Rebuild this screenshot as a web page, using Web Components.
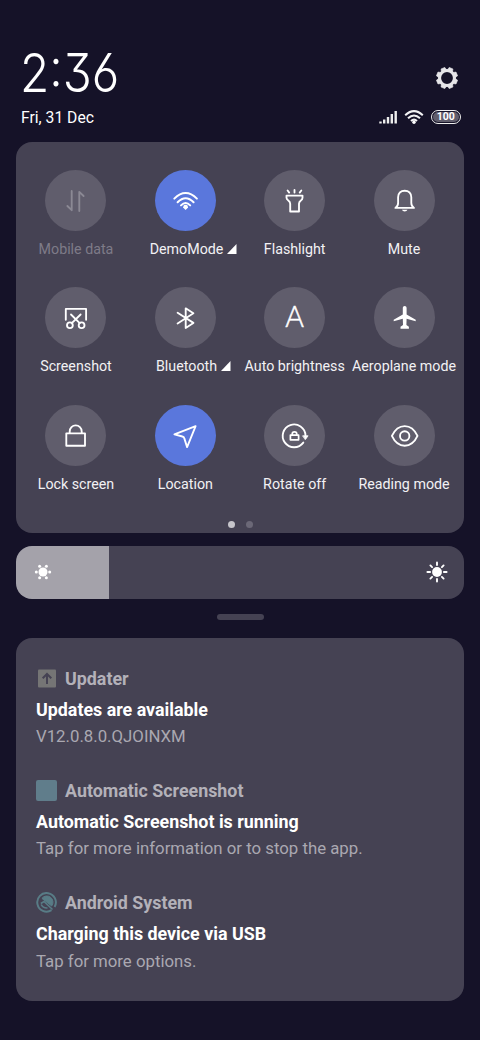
<!DOCTYPE html>
<html lang="en">
<head>
<meta charset="utf-8">
<title>Control centre</title>
<style>
html,body{margin:0;height:100%;background:#151228}
body{font-family:Roboto,"Noto Sans",sans-serif;color:#f2f1f4;overflow:hidden}
</style>
</head>
<body>
<control-centre></control-centre>
<script>
const define = (name, html, setup) => customElements.define(name, class extends HTMLElement {
  connectedCallback() {
    if (this.shadowRoot) return;
    const t = document.createElement('template');
    t.innerHTML = html;
    this.attachShadow({mode: 'open'}).append(t.content.cloneNode(true));
    if (setup) setup.call(this, this.shadowRoot);
  }
});

/* Tile glyphs share the 61 x 61 box of the round button. */
const icons = {
  data: '<path d="M26.7 21v19.2L22.4 36M34.3 41V21.8l4.3 4.2"/>',
  wifi: '<path d="M19.3 28.6Q30.6 17.4 41.9 28.6M22.6 32.2Q30.6 24.2 38.6 32.2M26 35.4Q30.6 30.8 35.2 35.4" stroke-width="2"/><path d="M28.2 37.2a2.400 2.400 0 0 1 4.800 0q0 .8-2.400 2.700q-2.400-1.900-2.400-2.700z" fill="#fff" stroke="none"/>',
  torch: '<path d="M30.5 20v2.600M23.600 20.500l1.600 2.100M37.300 20.500l-1.600 2.100M22.500 25.600h16v2.200q0 1.600-1.600 2.700q-1.900 1.300-1.900 3.300v7.700h-8.800v-7.700q0-2-1.900-3.300q-1.800-1.200-1.800-2.700z"/>',
  bell: '<path d="M21.400 37.900c1.900-1.300 2.700-2.500 2.700-5v-5.600c0-4 2.600-6.600 6.600-6.600s6.600 2.600 6.600 6.600v5.600c0 2.500.8 3.700 2.700 5z"/><path d="M27.900 39.800h5.600q-.7 1.800-2.800 1.800t-2.800-1.800z" fill="#fff" stroke="none"/>',
  shot: '<path d="M20.800 32.700V21.900h20.300v10.800M26 27.500l8.700 8.700M35.600 27.500l-8.800 8.700"/><circle cx="24.900" cy="38.200" r="2.900"/><circle cx="36.600" cy="38.200" r="2.900"/>',
  bt: '<path d="M22.600 25.700l15.800 10.200-7.700 5.100V21.300l7.700 5-15.800 10.300"/>',
  auto: '<text x="30.600" y="40.200" text-anchor="middle" font-family="Lato" font-weight="300" font-size="28.500" fill="#fff" stroke-width=".5">A</text>',
  plane: '<path d="M30.700 19.100c1.100 0 1.900.8 1.900 1.900v6.500l9.100 5.300v1.500l-9.100-2.500-.2 6.300 2.500 1.700v1.900h-8.400v-1.900l2.500-1.700-.2-6.300-9.100 2.500v-1.500l9.100-5.300V21c0-1.100.8-1.900 1.900-1.900z" fill="#fff" stroke="none"/>',
  lock: '<path d="M21.300 28.300h18.700v12.400H21.300zM24.700 28v-1.600a6 6 0 0 1 12 0V28"/>',
  nav: '<path d="M40.600 21.100 19.400 29.400l8 2.100q1.700.4 2 2.100l2.700 8.500z"/>',
  rotate: '<path d="M39.300 37.600A11.400 11.400 0 1 1 41.500 30.500"/><path d="M38.900 30.800h5.200l-2.600 3.600z" fill="#fff" stroke-width=".8"/><path d="M26.400 30.200h8.200v4.600h-8.200zM28.200 30v-.8a2.300 2.300 0 0 1 4.600 0v.8" stroke-width="1.700"/>',
  eye: '<path d="M17.900 30.900C24 17.800 37.400 17.800 43.500 30.900C37.400 44 24 44 17.900 30.900z"/><circle cx="30.700" cy="30.900" r="4.700"/>'
};

define('quick-tile', `<style>
:host{display:flex;flex-direction:column;align-items:center;min-width:0}
.disc{width:61px;height:61px;border-radius:50%;background:#605d6c}
:host([on]) .disc{background:#5a77dc}
svg{display:block}
.disc svg{fill:none;stroke:#fff;stroke-width:1.850;stroke-linecap:round;stroke-linejoin:round}
.label{display:flex;align-items:center;gap:4px;white-space:nowrap;margin-top:8px;font-size:14.250px;line-height:20px}
.more{display:none;margin:0 -15.900px 0 0}
:host([more]) .more{display:block}
:host([off]) .label{color:#7e7b88}
:host([off]) .disc svg{stroke:#8b8994}
</style>
<div class="disc"><svg width="61" height="61" viewBox="0 0 61 61"></svg></div>
<div class="label"><slot></slot><svg class="more" width="9.500" height="10"><path d="M9.500 0v10H0z" fill="#fff"/></svg></div>`,
function (root) { root.querySelector('.disc svg').innerHTML = icons[this.getAttribute('icon')]; });

define('status-header', `<style>
:host{display:flex;justify-content:space-between;height:142px;box-sizing:border-box;padding:45px 19px 0 21px}
.time{font:300 53px/56px Inter,sans-serif;font-feature-settings:"cv09","cv03";color:#fff;transform:scaleX(.9);transform-origin:-10px 0;white-space:nowrap;width:100px}
.date{font-size:15.700px;line-height:20px;margin-top:7px;color:#fff}
.right{display:flex;flex-direction:column;align-items:flex-end}
.gear{margin:21px 2px 0 0}
.row{display:flex;align-items:center;margin-top:20px;height:14px}
svg{display:block}
.bat{box-sizing:border-box;margin-left:7px;width:30.500px;height:14px;border:1.500px solid #eee;border-radius:7px;padding:1px}
.bat span{display:block;background:#605d6c;border-radius:5px;font:700 10.500px/10px Roboto,sans-serif;text-align:center;color:#fff;height:10px}
</style>
<div><div class="time">2:36</div><div class="date">Fri, 31 Dec</div></div>
<div class="right">
<svg class="gear" width="24" height="24" viewBox="-12 -12 24 24"><g fill="#e6e5e9"><path fill-rule="evenodd" d="M-9 0a9 9 0 1 0 18 0a9 9 0 1 0-18 0M-5.900 0a5.900 5.900 0 1 1 11.800 0a5.900 5.900 0 1 1-11.800 0"/><g id="t"></g></g></svg>
<div class="row">
<svg width="19" height="14"><path d="M1.500 13.500v-2M5.200 13.500v-4M9 13.500V7M12.800 13.500V4M16.700 13.500V1" stroke="#eee" stroke-width="2.400" fill="none"/></svg>
<svg style="margin-left:6px" width="20" height="14"><path d="M1.200 5.200Q10 -3 18.800 5.200M4 8.300Q10 2.600 16 8.300M7 11Q10 8.200 13 11" stroke="#f2f2f4" stroke-width="2" fill="none"/><circle cx="10" cy="12.200" r="1.700" fill="#fff"/></svg>
<div class="bat"><span>100</span></div>
</div></div>`,
function (root) {
  root.querySelector('#t').innerHTML = [0,1,2,3,4,5,6,7].map(i => `<path d="M-2.700-8 -2-10.600h4L2.700-8z" stroke="#e6e5e9" stroke-width=".6" stroke-linejoin="round" transform="rotate(${i * 45 + 22.5})"/>`).join('');
});

define('tile-panel', `<style>
:host{display:block;box-sizing:border-box;height:391px;margin:0 16px;padding:28px 5.300px 0;background:#454253;border-radius:16px}
.grid{display:grid;grid-template-columns:repeat(4,minmax(0,1fr));grid-auto-rows:117.300px}
.dots{display:flex;justify-content:center;gap:11px;margin-top:-1px}
i{width:7px;height:7px;border-radius:50%;background:#6b6877}
i:first-child{background:#c6c5cb}
</style><div class="grid"><slot></slot></div><div class="dots"><i></i><i></i></div>`);

define('brightness-slider', `<style>
:host{display:flex;align-items:center;justify-content:space-between;box-sizing:border-box;height:53.500px;margin:12.500px 16px 0;padding:0 15px;border-radius:16px;background:linear-gradient(90deg,#a4a2aa 93.500px,#454253 93.500px)}
svg{display:block}
</style>
<svg width="24" height="24" viewBox="-12 -12 24 24" fill="#fff"><circle r="4.500"/><circle cx="6.700" r="1.500"/><circle cx="-6.700" r="1.500"/><circle cx="3.350" cy="5.800" r="1.500"/><circle cx="-3.350" cy="5.800" r="1.500"/><circle cx="3.350" cy="-5.800" r="1.500"/><circle cx="-3.350" cy="-5.800" r="1.500"/></svg>
<svg width="24" height="24" viewBox="-12 -12 24 24" fill="#fff"><circle r="4.900"/><path d="M0-6.900v-2.700M0 9.600v-2.700M6.900 0h2.700M-6.900 0h-2.700M4.900 4.900l1.700 1.700M-4.900 4.900l-1.700 1.700M4.900-4.900l1.700-1.700M-4.900-4.900l-1.700-1.700" stroke="#fff" stroke-width="1.900" stroke-linecap="round"/></svg>`);

define('drag-handle', `<style>:host{display:block;width:47px;height:6px;border-radius:3px;background:#454253;margin:15px auto 17.500px}</style>`);

define('notification-list', `<style>:host{display:block;box-sizing:border-box;height:363.500px;margin:0 16px;padding:28.500px 20px 0;border-radius:16px;background:#454253}</style><slot></slot>`);

define('notification-item', `<style>
:host{display:block;height:112.400px}
.head{display:flex;align-items:center;gap:8px;height:24px;font-size:17.850px;line-height:22px;font-weight:700;color:#b3b1b9}
.app{padding-top:1px}
.icon{width:21px;height:21px}
.title{font-weight:700;font-size:17.850px;line-height:24px;margin-top:7.500px;color:#fff}
.text{font-size:16.800px;line-height:22px;margin-top:3.300px;color:#aaa8b1}
</style>
<div class="head"><div class="icon"><slot name="icon"></slot></div><div class="app"><slot name="app"></slot></div></div>
<div class="title"><slot name="title"></slot></div>
<div class="text"><slot></slot></div>`);

define('control-centre', `<style>
:host{display:block;width:480px;height:1040px;background:#151228}
svg{display:block}
</style>
<status-header></status-header>
<tile-panel>
<quick-tile icon="data" off>Mobile data</quick-tile>
<quick-tile icon="wifi" on more>DemoMode</quick-tile>
<quick-tile icon="torch">Flashlight</quick-tile>
<quick-tile icon="bell">Mute</quick-tile>
<quick-tile icon="shot">Screenshot</quick-tile>
<quick-tile icon="bt" more>Bluetooth</quick-tile>
<quick-tile icon="auto">Auto brightness</quick-tile>
<quick-tile icon="plane">Aeroplane mode</quick-tile>
<quick-tile icon="lock">Lock screen</quick-tile>
<quick-tile icon="nav" on>Location</quick-tile>
<quick-tile icon="rotate">Rotate off</quick-tile>
<quick-tile icon="eye">Reading mode</quick-tile>
</tile-panel>
<brightness-slider></brightness-slider>
<drag-handle></drag-handle>
<notification-list>
<notification-item>
<svg slot="icon" width="21" height="21"><rect x="2" y="1.500" width="18" height="18" rx="1" fill="#757575"/><path d="M11 16V6.500M6.700 10.300 11 6l4.300 4.300" fill="none" stroke="#454253" stroke-width="2"/></svg>
<span slot="app">Updater</span><span slot="title">Updates are available</span>V12.0.8.0.QJOINXM</notification-item>
<notification-item>
<svg slot="icon" width="21" height="21"><rect width="21" height="21" rx="2" fill="#607d8b"/></svg>
<span slot="app">Automatic Screenshot</span><span slot="title">Automatic Screenshot is running</span>Tap for more information or to stop the app.</notification-item>
<notification-item>
<svg slot="icon" width="21" height="21" fill="none" stroke="#587c86" stroke-width="2"><path d="M15.500 18.200A9.300 9.300 0 1 1 18.600 15"/><path d="M5.900 6.400A6 6 0 0 1 15.700 14z" fill="#587c86" stroke-width="1"/><path d="M4.800 11.500 8 9.500l8.500 8M5.200 12.500Q7 16.300 11.500 16" stroke-width="1.600"/></svg>
<span slot="app">Android System</span><span slot="title">Charging this device via USB</span>Tap for more options.</notification-item>
</notification-list>`);
</script>
</body>
</html>
